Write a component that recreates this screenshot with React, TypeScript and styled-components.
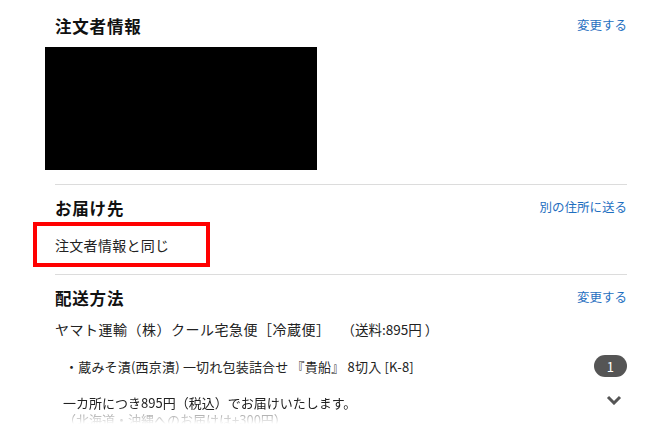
import styled, { createGlobalStyle } from "styled-components";

const GlobalStyle = createGlobalStyle`
  body {
    margin: 0;
    background: #fff;
    font-family: "Noto Sans CJK JP", "Noto Sans", sans-serif;
    color: #222;
  }
`;

const Page = styled.div`
  width: 572px;
  padding-left: 55px;
`;

const Section = styled.section<{ $top: number; $bottom: number; $last?: boolean }>`
  padding-top: ${(p) => p.$top}px;
  padding-bottom: ${(p) => p.$bottom}px;
  border-bottom: ${(p) => (p.$last ? "none" : "1px solid #dcdcdc")};
`;

const Header = styled.div`
  display: flex;
  justify-content: space-between;
  align-items: center;
  height: 20px;
`;

const Title = styled.h2`
  margin: 0;
  font-size: 16.5px;
  font-weight: 700;
  color: #111;
  line-height: 20px;
  letter-spacing: 0.8px;
`;

const LinkText = styled.a`
  font-size: 12.5px;
  color: #1f6fbf;
  text-decoration: none;
  line-height: 20px;
  margin-top: -2px;
`;

const Masked = styled.div`
  margin: 11px 0 0 -10px;
  width: 272px;
  height: 123px;
  background: #000;
`;

const Highlight = styled.div`
  box-sizing: border-box;
  margin: 4px 0 0 -22px;
  width: 177px;
  height: 45px;
  border: 4px solid #ff0000;
  padding-left: 18px;
  display: flex;
  align-items: center;
  font-size: 14px;
  letter-spacing: 0.3px;
  color: #222;
`;

const Carrier = styled.div`
  margin-top: 11px;
  font-size: 14px;
  line-height: 20px;
  letter-spacing: 0.5px;
  display: flex;
  gap: 11px;
`;

const Fee = styled.span`
  font-size: 13.5px;
  letter-spacing: 0;
`;

const ItemRow = styled.div`
  margin-top: 16px;
  height: 22px;
  display: flex;
  align-items: center;
  justify-content: space-between;
  padding-left: 10px;
  font-size: 13px;
  letter-spacing: 0.2px;
`;

const Badge = styled.span`
  width: 33px;
  height: 22px;
  border-radius: 11px;
  background: #555;
  color: #fff;
  font-size: 13px;
  display: flex;
  align-items: center;
  justify-content: center;
`;

const NoteRow = styled.div`
  margin-top: 17px;
  display: flex;
  justify-content: space-between;
  padding-left: 8px;
`;

const NoteText = styled.div`
  font-size: 13px;
  line-height: 17px;
  height: 30px;
  overflow: hidden;
  -webkit-mask-image: linear-gradient(to bottom, #000 55%, transparent 100%);
  mask-image: linear-gradient(to bottom, #000 55%, transparent 100%);
`;

const Faded = styled.div`
  color: #888;
`;

const Chevron = styled.svg`
  margin: 1px 5px 0 0;
`;

export default function App() {
  return (
    <Page>
      <GlobalStyle />
      <Section $top={16} $bottom={14}>
        <Header>
          <Title>注文者情報</Title>
          <LinkText>変更する</LinkText>
        </Header>
        <Masked />
      </Section>
      <Section $top={13} $bottom={7}>
        <Header>
          <Title>お届け先</Title>
          <LinkText>別の住所に送る</LinkText>
        </Header>
        <Highlight>注文者情報と同じ</Highlight>
      </Section>
      <Section $top={13} $bottom={0} $last>
        <Header>
          <Title>配送方法</Title>
          <LinkText>変更する</LinkText>
        </Header>
        <Carrier>
          <span>ヤマト運輸（株）クール宅急便［冷蔵便］</span>
          <Fee>（送料:895円 ）</Fee>
        </Carrier>
        <ItemRow>
          <span>・蔵みそ漬(西京漬) 一切れ包装詰合せ 『貴船』 8切入 [K-8]</span>
          <Badge>1</Badge>
        </ItemRow>
        <NoteRow>
          <NoteText>
            <div>一カ所につき895円（税込）でお届けいたします。</div>
            <Faded>（北海道・沖縄へのお届けは+300円）</Faded>
          </NoteText>
          <Chevron width="16" height="10" viewBox="0 0 16 10">
            <polyline points="2,2 8,8 14,2" fill="none" stroke="#555" strokeWidth="3" />
          </Chevron>
        </NoteRow>
      </Section>
    </Page>
  );
}
